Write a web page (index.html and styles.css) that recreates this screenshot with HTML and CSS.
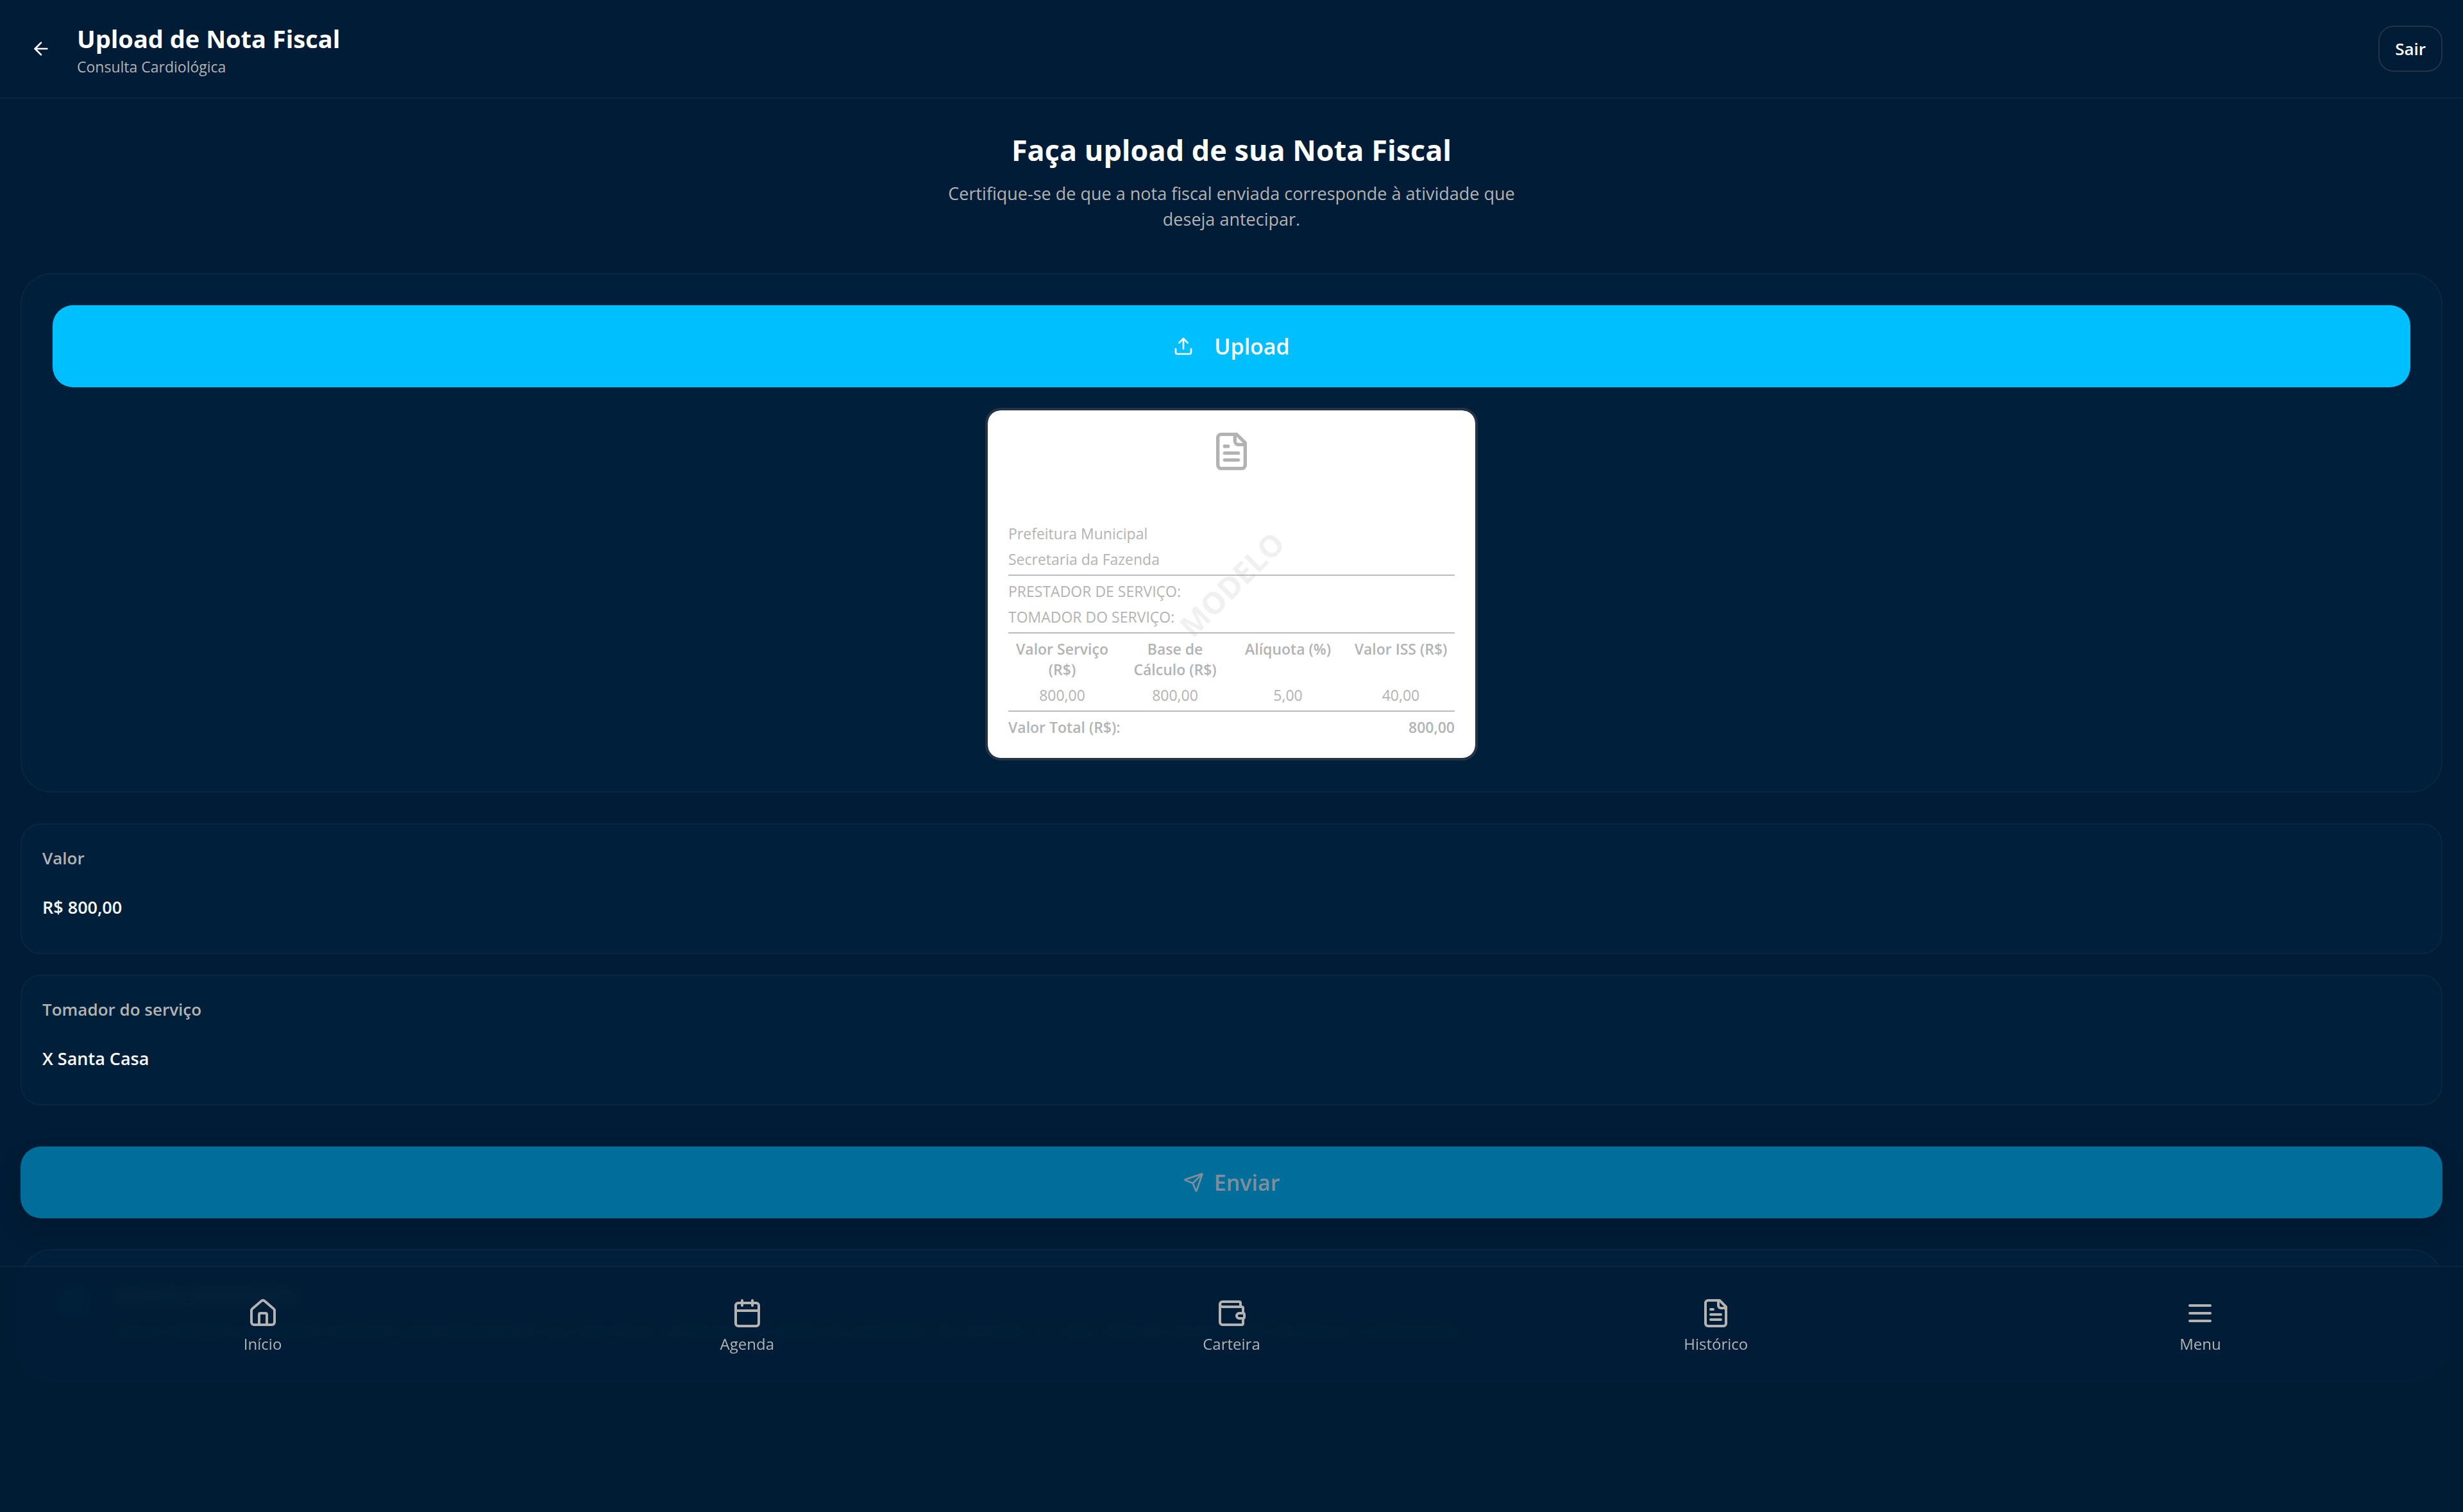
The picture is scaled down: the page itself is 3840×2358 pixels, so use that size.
FILE: index.html
```html
<!DOCTYPE html>
<html lang="pt-BR">
<head>
<meta charset="utf-8">
<meta name="viewport" content="width=device-width, initial-scale=1">
<title>Upload de Nota Fiscal</title>
<link rel="stylesheet" href="styles.css">
</head>
<body>
<header class="topbar">
  <button class="back" type="button" aria-label="Voltar">
    <svg class="icon icon-sm" viewBox="0 0 24 24"><path d="m12 19-7-7 7-7"/><path d="M19 12H5"/></svg>
  </button>
  <div class="topbar-text">
    <h1 class="topbar-title">Upload de Nota Fiscal</h1>
    <p class="topbar-sub">Consulta Cardiológica</p>
  </div>
  <button class="logout" type="button">Sair</button>
</header>

<main class="content">
  <section class="intro">
    <h2 class="intro-title">Faça upload de sua Nota Fiscal</h2>
    <p class="intro-text">Certifique-se de que a nota fiscal enviada corresponde à atividade que deseja antecipar.</p>
  </section>

  <section class="card upload-card">
    <button class="upload" type="button">
      <svg class="icon icon-sm" viewBox="0 0 24 24"><path d="M21 15v4a2 2 0 0 1-2 2H5a2 2 0 0 1-2-2v-4"/><path d="m17 8-5-5-5 5"/><path d="M12 3v12"/></svg>
      Upload
    </button>
    <div class="invoice">
      <svg class="icon icon-lg invoice-icon" viewBox="0 0 24 24"><path d="M15 2H6a2 2 0 0 0-2 2v16a2 2 0 0 0 2 2h12a2 2 0 0 0 2-2V7Z"/><path d="M14 2v4a2 2 0 0 0 2 2h4"/><path d="M10 9H8"/><path d="M16 13H8"/><path d="M16 17H8"/></svg>
      <div class="invoice-block">
        <p>Prefeitura Municipal</p>
        <p>Secretaria da Fazenda</p>
      </div>
      <div class="invoice-block">
        <p>PRESTADOR DE SERVIÇO:</p>
        <p>TOMADOR DO SERVIÇO:</p>
      </div>
      <div class="invoice-block">
        <table class="invoice-table">
          <thead>
            <tr><th>Valor Serviço (R$)</th><th>Base de Cálculo (R$)</th><th>Alíquota (%)</th><th>Valor ISS (R$)</th></tr>
          </thead>
          <tbody>
            <tr><td>800,00</td><td>800,00</td><td>5,00</td><td>40,00</td></tr>
          </tbody>
        </table>
      </div>
      <div class="invoice-total"><span>Valor Total (R$):</span><span>800,00</span></div>
      <span class="watermark">MODELO</span>
    </div>
  </section>

  <div class="fields">
    <div class="card field">
      <label class="field-label" for="valor">Valor</label>
      <input class="field-value" id="valor" type="text" value="R$ 800,00" readonly>
    </div>
    <div class="card field">
      <label class="field-label" for="tomador">Tomador do serviço</label>
      <input class="field-value" id="tomador" type="text" value="X Santa Casa" readonly>
    </div>
  </div>

  <button class="send" type="submit" disabled>
    <svg class="icon icon-sm" viewBox="0 0 24 24"><path d="M14.536 21.686a.5.5 0 0 0 .937-.024l6.5-19a.496.496 0 0 0-.635-.635l-19 6.5a.5.5 0 0 0-.024.937l7.93 3.18a2 2 0 0 1 1.112 1.11z"/><path d="m21.854 2.147-10.94 10.939"/></svg>
    Enviar
  </button>

  <section class="card notice">
    <div class="notice-icon">
      <svg class="icon icon-sm" viewBox="0 0 24 24"><path d="M15 2H6a2 2 0 0 0-2 2v16a2 2 0 0 0 2 2h12a2 2 0 0 0 2-2V7Z"/><path d="M14 2v4a2 2 0 0 0 2 2h4"/></svg>
    </div>
    <div>
      <h3 class="notice-title">Análise Automática</h3>
      <p class="notice-text">Nossa inteligência artificial analisará automaticamente sua nota fiscal, verificando os dados do prestador, do tomador e o valor total do serviço antes de liberar a antecipação.</p>
    </div>
  </section>
</main>

<nav class="tabs">
  <a class="tab" href="#inicio">
    <svg class="icon icon-md" viewBox="0 0 24 24"><path d="M15 21v-8a1 1 0 0 0-1-1h-4a1 1 0 0 0-1 1v8"/><path d="M3 10a2 2 0 0 1 .709-1.528l7-5.999a2 2 0 0 1 2.582 0l7 5.999A2 2 0 0 1 21 10v9a2 2 0 0 1-2 2H5a2 2 0 0 1-2-2z"/></svg>
    <span>Início</span>
  </a>
  <a class="tab" href="#agenda">
    <svg class="icon icon-md" viewBox="0 0 24 24"><path d="M8 2v4"/><path d="M16 2v4"/><rect width="18" height="18" x="3" y="4" rx="2"/><path d="M3 10h18"/></svg>
    <span>Agenda</span>
  </a>
  <a class="tab" href="#carteira">
    <svg class="icon icon-md" viewBox="0 0 24 24"><path d="M19 7V4a1 1 0 0 0-1-1H5a2 2 0 0 0 0 4h15a1 1 0 0 1 1 1v4h-3a2 2 0 0 0 0 4h3a1 1 0 0 0 1-1v-2a1 1 0 0 0-1-1"/><path d="M3 5v14a2 2 0 0 0 2 2h15a1 1 0 0 0 1-1v-4"/></svg>
    <span>Carteira</span>
  </a>
  <a class="tab" href="#historico">
    <svg class="icon icon-md" viewBox="0 0 24 24"><path d="M15 2H6a2 2 0 0 0-2 2v16a2 2 0 0 0 2 2h12a2 2 0 0 0 2-2V7Z"/><path d="M14 2v4a2 2 0 0 0 2 2h4"/><path d="M10 9H8"/><path d="M16 13H8"/><path d="M16 17H8"/></svg>
    <span>Histórico</span>
  </a>
  <a class="tab" href="#menu">
    <svg class="icon icon-md" viewBox="0 0 24 24"><path d="M4 6h16"/><path d="M4 12h16"/><path d="M4 18h16"/></svg>
    <span>Menu</span>
  </a>
</nav>
</body>
</html>
```
FILE: styles.css
```css
:root {
  --bg: #001c36;
  --card: #001f3a;
  --line: #0b263e;
  --line-strong: #243444;
  --accent: #00bfff;
  --muted: #b3b3b3;
}

* {
  box-sizing: border-box;
  margin: 0;
}

body {
  min-height: 100vh;
  background: var(--bg);
  color: #fff;
  font-family: "Segoe UI", "Open Sans", "Noto Sans", sans-serif;
  font-size: 28px;
  line-height: 40px;
}

button,
input {
  padding: 0;
  border: 0;
  background: none;
  color: inherit;
  font: inherit;
}

.icon {
  flex: none;
  fill: none;
  stroke: currentColor;
  stroke-width: 2;
  stroke-linecap: round;
  stroke-linejoin: round;
}

.icon-sm { width: 32px; height: 32px; }
.icon-md { width: 48px; height: 48px; }
.icon-lg { width: 64px; height: 64px; }

/* Top bar */
.topbar {
  display: flex;
  align-items: center;
  gap: 24px;
  padding: 32px;
  border-bottom: 2px solid var(--line);
}

.back {
  display: grid;
  place-items: center;
  width: 64px;
  height: 64px;
}

.topbar-text { flex: 1; }

.topbar-title {
  font-size: 38px;
  line-height: 56px;
  font-weight: 700;
}

.topbar-sub {
  color: var(--muted);
  font-size: 23px;
  line-height: 32px;
}

.logout {
  height: 72px;
  padding: 0 24px;
  border: 2px solid var(--line-strong);
  border-radius: 24px;
  font-size: 26px;
  font-weight: 600;
}

/* Page content */
.content {
  display: flex;
  flex-direction: column;
  padding: 48px 32px;
}

.intro {
  max-width: 896px;
  margin: 0 auto 64px;
  text-align: center;
}

.intro-title {
  margin-bottom: 16px;
  font-size: 45px;
  line-height: 64px;
  font-weight: 700;
}

.intro-text {
  color: var(--muted);
  font-size: 27px;
}

.card {
  border: 2px solid var(--line);
  background: var(--card);
}

.upload-card {
  display: flex;
  flex-direction: column;
  gap: 32px;
  padding: 48px;
  border-radius: 48px;
}

.upload {
  display: flex;
  align-items: center;
  justify-content: center;
  gap: 32px;
  height: 128px;
  border-radius: 32px;
  background: var(--accent);
  font-size: 34px;
  font-weight: 600;
}

/* Sample invoice */
.invoice {
  position: relative;
  display: flex;
  flex-direction: column;
  gap: 8px;
  width: 100%;
  max-width: 768px;
  margin: 0 auto;
  padding: 32px;
  border: 4px solid var(--line-strong);
  border-radius: 24px;
  background: #fff;
  background-clip: padding-box;
  color: var(--muted);
  font-size: 23px;
  line-height: 32px;
}

.invoice-icon {
  align-self: center;
  margin-bottom: 72px;
}

.invoice-block {
  display: flex;
  flex-direction: column;
  gap: 8px;
  padding-bottom: 8px;
  border-bottom: 2px solid #b9bcc0;
}

.invoice-table {
  width: calc(100% + 16px);
  margin: 0 -8px;
  table-layout: fixed;
  border-spacing: 8px 0;
  text-align: center;
}

.invoice-table th,
.invoice-table td {
  padding: 0;
  vertical-align: top;
}

.invoice-table th {
  padding-bottom: 8px;
  font-weight: 600;
}

.invoice-total {
  display: flex;
  justify-content: space-between;
  font-weight: 600;
}

.watermark {
  position: absolute;
  inset: 0;
  display: grid;
  place-items: center;
  color: rgba(179, 179, 179, 0.2);
  font-size: 47px;
  font-weight: 700;
  transform: rotate(-45deg);
}

/* Read-only fields */
.fields {
  display: flex;
  flex-direction: column;
  gap: 32px;
  margin: 48px 0 64px;
}

.field {
  display: flex;
  flex-direction: column;
  gap: 16px;
  padding: 32px;
  border-radius: 32px;
}

.field-label {
  color: var(--muted);
  font-size: 26px;
  font-weight: 600;
}

.field-value {
  height: 80px;
  font-size: 27px;
  font-weight: 600;
}

.send {
  display: flex;
  align-items: center;
  justify-content: center;
  gap: 16px;
  height: 112px;
  border-radius: 32px;
  background: var(--accent);
  box-shadow: 0 20px 40px -4px rgba(0, 0, 0, 0.2);
  font-size: 34px;
  font-weight: 600;
  opacity: 0.5;
}

.notice {
  display: flex;
  gap: 32px;
  margin-top: 48px;
  padding: 48px;
  border-radius: 48px;
}

.notice-icon {
  display: grid;
  place-items: center;
  flex: none;
  width: 64px;
  height: 64px;
  border-radius: 24px;
  background: rgba(0, 191, 255, 0.2);
  color: var(--accent);
}

.notice-title {
  margin-bottom: 16px;
  font-size: 31px;
  line-height: 40px;
  font-weight: 600;
}

.notice-text {
  color: var(--muted);
  font-size: 26px;
}

/* Bottom navigation */
.tabs {
  position: fixed;
  right: 0;
  bottom: 0;
  left: 0;
  display: grid;
  grid-template-columns: repeat(5, 1fr);
  align-items: start;
  padding: 48px 32px 246px;
  border-top: 2px solid var(--line);
  background: rgba(0, 28, 54, 0.95);
  backdrop-filter: blur(10px);
}

.tab {
  display: flex;
  flex-direction: column;
  align-items: center;
  gap: 8px;
  color: var(--muted);
  font-size: 24px;
  line-height: 32px;
  text-decoration: none;
}
```
